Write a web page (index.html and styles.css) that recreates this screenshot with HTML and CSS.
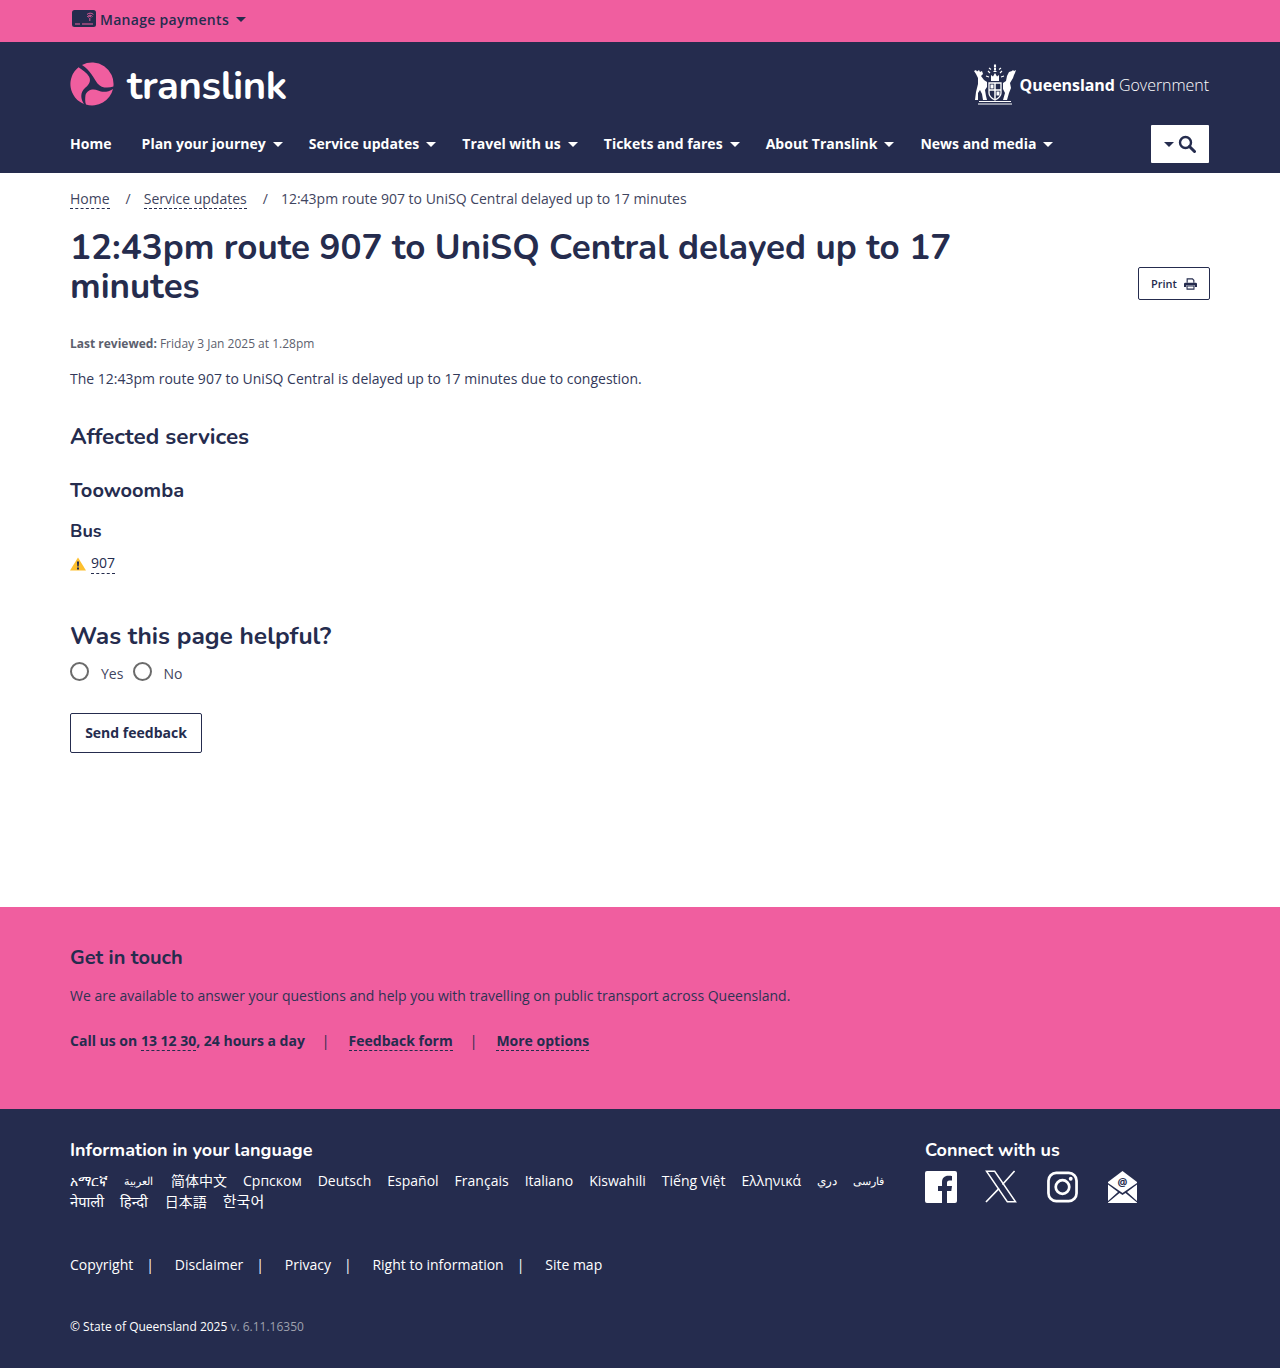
FILE: index.html
```html
<!DOCTYPE html>
<html lang="en">
<head>
<meta charset="utf-8">
<title>12:43pm route 907 to UniSQ Central delayed up to 17 minutes</title>
<link rel="stylesheet" href="styles.css">
</head>
<body>
<div class="topbar">
  <div class="wrap topbar-in">
    <svg class="card-icon" width="24" height="17" viewBox="0 0 24 17"><rect x="0" y="0" width="24" height="17" rx="2.500" fill="#252c4e"/><path d="M3 14h5M10 14h11" stroke="#f05e9f" stroke-width="1"/><path d="M16.500 7.500a1.300 1.300 0 0 1 2.600 0M15.300 7a3 3 0 0 1 5.200-.5M15 4.500a4.500 4.500 0 0 1 6.400 0M17.800 11V8" fill="none" stroke="#f05e9f" stroke-width=".9"/></svg>
    <span class="manage">Manage payments</span><span class="caret caret-dark"></span>
  </div>
</div>
<header class="header">
  <div class="wrap">
    <div class="brand-row">
      <div class="brand">
        <svg class="brand-mark" width="44" height="44" viewBox="0 0 44 44" fill="#f05e9f"><path d="M12 3A21.500 21.500 0 0 1 43.400 24.500C38 26.500 31 26 27.500 21.500C24 16.500 20 8 12 3Z"/><path d="M8.500 5.200A21.500 21.500 0 0 0 14 42C10 36 10.500 30 15 26C20 22 21 18 19 14.500C17 11 13 8 8.500 5.200Z"/><path d="M16 42.600A21.500 21.500 0 0 0 43 27C38 30.500 32 30.500 28 28.500C23 26 17 28 15.500 33C15 37 15 40 16 42.600Z"/></svg>
        <span class="brand-name">translink</span>
      </div>
      <div class="qgov">
        <svg class="crest" width="44" height="42" viewBox="0 0 44 42" fill="#fff" stroke="none"><path d="M1 8l2-1 1 1.500L6 7l1 2 2-1 1 3-2 2 3 4 3 2v5l-2 3 1 6 1 4h-4l-1-6-2-4-2 3v7H2l1-8 2-8v-6L3 11z"/><path d="M43 7l-1 3-1 2-1 3-3 5 1 5-2 5-2 7h-4l2-7-2-4v-6l3-2 1-5 2-4 3-1 1-1 1 1z"/><path d="M16 20h12v10q0 4-6 7q-6-3-6-7z" fill="none" stroke="#fff" stroke-width="1.300"/><path d="M22 20v16M16 27h12" stroke="#fff" stroke-width="1.500"/><path d="M17.500 21.500h3v4h-3zM23.500 28.500h3v4h-3z"/><path d="M18 18v-6l2 1.500L22 10l2 3.500 2-1.500v6z"/><path d="M20 9l2-2 2 2zM21 5h2v2h-2z"/><path d="M15 8l2 2M29 8l-2 2M13 13l3 1M31 13l-3 1M21.500 2h1v2h-1zM16 5l2 1.500M28 5l-2 1.500" stroke="#fff" stroke-width="1.100" fill="none"/><path d="M6 38.500h32M5 41h34" stroke="#fff" stroke-width="1" fill="none"/></svg>
        <span class="qgov-text"><b>Queensland</b> Government</span>
      </div>
    </div>
    <nav class="nav">
      <a class="nav-link first" href="#">Home</a>
      <a class="nav-link" href="#">Plan your journey<span class="caret"></span></a>
      <a class="nav-link" href="#">Service updates<span class="caret"></span></a>
      <a class="nav-link" href="#">Travel with us<span class="caret"></span></a>
      <a class="nav-link" href="#">Tickets and fares<span class="caret"></span></a>
      <a class="nav-link" href="#">About Translink<span class="caret"></span></a>
      <a class="nav-link" href="#">News and media<span class="caret"></span></a>
      <button class="search-btn" type="button" aria-label="Search"><span class="caret caret-dark caret-sm"></span><svg width="18" height="18" viewBox="0 0 18 18" fill="none" stroke="#252c4e"><circle cx="7.500" cy="7.500" r="5.500" stroke-width="2.400"/><path d="M11.500 11.500l5 5" stroke-width="3" stroke-linecap="round"/></svg></button>
    </nav>
  </div>
</header>
<main class="wrap main">
  <ol class="crumbs">
    <li><a class="dash" href="#">Home</a></li>
    <li class="sep">/</li>
    <li><a class="dash" href="#">Service updates</a></li>
    <li class="sep">/</li>
    <li>12:43pm route 907 to UniSQ Central delayed up to 17 minutes</li>
  </ol>
  <div class="title-row">
    <h1>12:43pm route 907 to UniSQ Central delayed up to 17 minutes</h1>
    <button class="print" type="button">Print<svg width="13" height="13" viewBox="0 0 15 14"><path d="M3 6V1h7l2 2v3h-1.300V3.500L9.500 2.300H4.300V6z" fill="#252c4e"/><path d="M1.500 6h12q1.500 0 1.500 1.500V11h-2.500V9h-10v2H0V7.500Q0 6 1.500 6z" fill="#252c4e"/><path d="M3.500 10h8v3.500h-8z" fill="none" stroke="#252c4e" stroke-width="1.200"/></svg></button>
  </div>
  <p class="reviewed"><b>Last reviewed:</b> Friday 3 Jan 2025 at 1.28pm</p>
  <p class="lead">The 12:43pm route 907 to UniSQ Central is delayed up to 17 minutes due to congestion.</p>
  <h2 class="affected">Affected services</h2>
  <h3 class="region">Toowoomba</h3>
  <h4 class="mode">Bus</h4>
  <div class="route">
    <svg width="16" height="14" viewBox="0 0 16 14"><path d="M8 .5L16 13.500H0z" fill="#fdc02f"/><path d="M6.900 4.500h2.200l-.4 5H7.300zM7 10.400h2v2H7z" fill="#252c4e"/></svg>
    <a class="dash" href="#">907</a>
  </div>
  <h2 class="helpful">Was this page helpful?</h2>
  <div class="radios">
    <label class="radio"><span class="radio-dot"></span><span>Yes</span></label>
    <label class="radio"><span class="radio-dot"></span><span>No</span></label>
  </div>
  <button class="send" type="button">Send feedback</button>
</main>
<section class="touch">
  <div class="wrap">
    <h2>Get in touch</h2>
    <p class="touch-text">We are available to answer your questions and help you with travelling on public transport across Queensland.</p>
    <p class="touch-links"><span>Call us on <a class="dash" href="#">13 12 30</a>, 24 hours a day</span><i>|</i><a class="dash" href="#">Feedback form</a><i>|</i><a class="dash" href="#">More options</a></p>
  </div>
</section>
<footer class="footer">
  <div class="wrap">
    <div class="foot-top">
      <div class="langs">
        <h2>Information in your language</h2>
        <ul class="lang-list">
          <li lang="am">አማርኛ</li><li class="ar" lang="ar">العربية</li><li lang="zh-Hans">简体中文</li><li>Српском</li><li>Deutsch</li><li>Español</li><li>Français</li><li>Italiano</li><li>Kiswahili</li><li>Tiếng Việt</li><li>Ελληνικά</li><li class="prs" lang="prs">دري</li><li class="fa" lang="fa">فارسی</li><li class="hi" lang="ne">नेपाली</li><li class="hi" lang="hi">हिन्दी</li><li class="ja" lang="ja">日本語</li><li class="ko" lang="ko">한국어</li>
        </ul>
      </div>
      <div class="connect">
        <h2>Connect with us</h2>
        <div class="socials">
          <svg width="32" height="32" viewBox="0 0 32 32"><path d="M2 0h28a2 2 0 0 1 2 2v28a2 2 0 0 1-2 2h-8V20h4.300l.7-5h-5v-3c0-1.500.5-2.500 2.500-2.500H27V5c-.6-.1-2-.2-3.700-.2-3.800 0-6.300 2.300-6.300 6.500V15h-4v5h4v12H2a2 2 0 0 1-2-2V2a2 2 0 0 1 2-2z" fill="#fff"/></svg>
          <svg class="x-icon" width="32" height="33" viewBox="0 0 33 33" fill="none" stroke="#fff"><path d="M1.500 .8h8.500l21.500 31.400H23z" stroke-width="1.500"/><path d="M30.500 .5L18 14.500M14.500 18.500L1 32.500" stroke-width="1.700"/></svg>
          <svg width="31" height="32" viewBox="0 0 32 32" fill="none" stroke="#fff"><rect x="1.500" y="1.500" width="29" height="29" rx="8" stroke-width="2.800"/><circle cx="16" cy="16" r="7" stroke-width="2.800"/><circle cx="24.500" cy="7.500" r="2" fill="#fff" stroke="none"/></svg>
          <svg width="29" height="32" viewBox="0 0 29 32"><path d="M14.500 0L29 11v1L14.500 22 0 12v-1z" fill="#fff"/><path d="M0 13.500l10 7.500L0 30zM29 13.500L19 21l10 9zM0 32v-.5L11.500 22l3 2 3-2L29 31.500v.5z" fill="#fff"/><text x="14.500" y="14.500" text-anchor="middle" class="at">@</text></svg>
        </div>
      </div>
    </div>
    <ul class="foot-links">
      <li>Copyright</li><li>Disclaimer</li><li>Privacy</li><li>Right to information</li><li class="last">Site map</li>
    </ul>
    <p class="copy">© State of Queensland 2025 <span>v. 6.11.16350</span></p>
  </div>
</footer>
</body>
</html>
```
FILE: styles.css
```css
* { box-sizing: border-box; }
html, body { margin: 0; padding: 0; }
body { font-family: "Open Sans", "Noto Sans", "Noto Sans CJK SC", sans-serif; font-size: 14px; color: #252c4e; background: #fff; }
a { color: inherit; text-decoration: none; }
.wrap { width: 1140px; margin: 0 0 0 70px; }
h1, h2, h3, h4 { font-family: "Nunito", "Lato", "Noto Sans", sans-serif; margin: 0; font-weight: 700; color: #252c4e; }
.caret { display: inline-block; width: 0; height: 0; margin-left: 7px; border-left: 5px solid transparent; border-right: 5px solid transparent; border-top: 5px solid #fff; vertical-align: 2px; }
.caret-dark { border-top-color: #252c4e; }
.search-btn .caret-sm { margin: 0 4px 0 0; }
.dash { border-bottom: 1px dashed #252c4e; }

.topbar { background: #f05e9f; height: 42px; }
.topbar-in { display: flex; align-items: center; height: 39px; padding-left: 2px; }
.card-icon { margin-top: -2px; }
.manage { font-weight: 600; font-size: 14px; margin-left: 4px; letter-spacing: .3px; }

.header { background: #252c4e; height: 131px; color: #fff; }
.brand-row { display: flex; justify-content: space-between; align-items: center; height: 83px; }
.brand { display: flex; align-items: center; gap: 13px; }
.brand-name { font-family: "Nunito", "Lato", sans-serif; font-size: 40px; font-weight: 700; color: #fff; letter-spacing: -.4px; line-height: 44px; margin-top: 4px; }
.qgov { display: flex; align-items: center; gap: 3px; padding-right: 1px; }
.qgov-text { font-family: "Open Sans", sans-serif; font-size: 16px; font-weight: 350; margin-top: 2px; letter-spacing: -.05px; }
.qgov-text b { font-weight: 700; }
.nav { display: flex; align-items: center; height: 38px; padding-right: 1px; }
.nav-link { font-size: 14px; font-weight: 700; color: #fff; margin: 0 26.100px 2px 0; white-space: nowrap; }
.nav-link.first { margin-right: 30.200px; }
.search-btn { margin-left: auto; width: 58px; height: 38px; background: #fff; border: 0; border-radius: 1px; padding: 0; display: flex; align-items: center; justify-content: center; }

.main { height: 734px; padding-top: 16px; }
.crumbs { list-style: none; margin: 0; padding: 0; display: flex; font-size: 14px; line-height: 20px; color: #3f4560; }
.crumbs .sep { margin: 0 13px 0 16px; }
.title-row { display: flex; justify-content: space-between; align-items: flex-end; margin-top: 19px; }
h1 { width: 900px; font-size: 35px; line-height: 39px; }
.print { width: 72px; height: 33px; margin-bottom: 6px; background: #fff; border: 1px solid #252c4e; border-radius: 2px; font: 600 11px "Open Sans", sans-serif; color: #252c4e; display: flex; align-items: center; justify-content: center; gap: 7px; padding: 0; }
.reviewed { margin: 29px 0 0; font-size: 12px; line-height: 18px; color: #5c5f6e; }
.lead { margin: 16px 0 0; font-size: 14px; line-height: 20px; color: #33395a; }
.affected { font-size: 22.500px; line-height: 28px; margin-top: 34px; }
.region { font-size: 20px; line-height: 24px; margin-top: 28px; }
.mode { font-size: 18px; line-height: 22px; margin-top: 17px; }
.route { display: flex; align-items: center; gap: 5px; margin-top: 11px; font-size: 14px; line-height: 20px; }
.helpful { font-size: 24.500px; line-height: 30px; margin-top: 47px; }
.radios { display: flex; gap: 10px; margin-top: 13px; color: #3f4560; }
.radio { display: flex; align-items: center; gap: 12px; line-height: 20px; }
.radio + .radio { gap: 11px; }
.radio-dot { width: 19px; height: 19px; border: 2px solid #6b6b6b; border-radius: 50%; margin-top: -6px; }
.send { display: block; margin-top: 29px; width: 132px; height: 40px; background: #fff; border: 1px solid #252c4e; border-radius: 2px; font: 700 14px "Open Sans", sans-serif; color: #252c4e; padding: 0 0 2px; }

.touch { background: #f05e9f; height: 202px; padding-top: 37px; }
.touch h2 { font-size: 20px; line-height: 27px; }
.touch-text { margin: 15px 0 0; line-height: 20px; color: #2d3354; }
.touch-links { margin: 25px 0 0; line-height: 20px; font-weight: 700; display: flex; }
.touch-links i { font-style: normal; font-weight: 400; margin: 0 19px 0 17px; }
.touch-links > .dash { line-height: 15px; margin-top: 2px; height: 18px; }

.footer { background: #252c4e; height: 259px; color: #fff; padding-top: 28px; }
.footer h2 { color: #fff; font-size: 18px; line-height: 26px; }
.foot-top { display: flex; }
.langs { width: 855px; }
.lang-list { list-style: none; margin: 8px 0 0; padding: 0; display: flex; flex-wrap: wrap; column-gap: 16px; line-height: 20px; width: 830px; }
.lang-list li { height: 20px; }
.lang-list .ar { font-size: 11.400px; width: 31px; }
.lang-list .prs { font-size: 12px; }
.lang-list .fa { font-size: 10.500px; }
.lang-list .hi { font-size: 14.700px; }
.lang-list .ja { font-family: "Noto Sans CJK JP", sans-serif; margin-left: 1px; }
.lang-list .ko { font-family: "Noto Sans CJK KR", sans-serif; font-size: 15px; }
.socials { display: flex; align-items: center; gap: 30px; margin-top: 7px; }
.x-icon { margin-left: -2px; }
.at { font: 700 11px "Open Sans", sans-serif; fill: #252c4e; }
.foot-links { list-style: none; margin: 44px 0 0; padding: 0; display: flex; line-height: 20px; }
.foot-links li::after { content: "|"; margin: 0 20.800px 0 13px; }
.foot-links li.last::after { content: none; }
.copy { margin: 43px 0 0; font-size: 12px; line-height: 18px; }
.copy span { color: #9ea1ad; }
```
